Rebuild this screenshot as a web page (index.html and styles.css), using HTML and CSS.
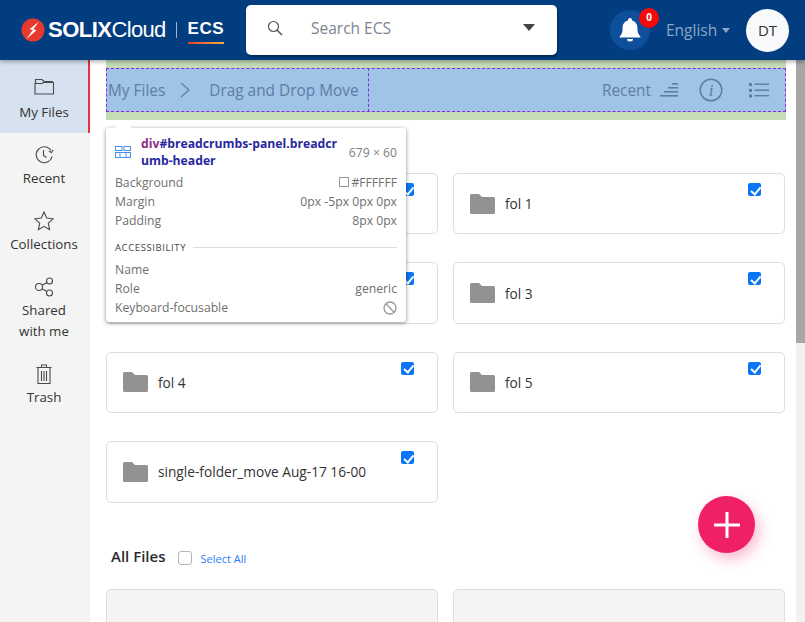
FILE: index.html
```html
<!DOCTYPE html>
<html lang="en">
<head>
  <meta charset="UTF-8">
  <title>ECS - My Files</title>
  <link rel="stylesheet" href="styles.css">
</head>
<body>
  <header class="topbar">
    <div class="logo">
      <svg class="logo-mark" width="24" height="24" viewBox="0 0 24 24">
        <circle cx="12" cy="12" r="11.5" fill="#e8392f"/>
        <path d="M18 3.500 L8.500 11.200 L11.800 12 L5.500 21 L15.500 12.200 L12.300 11.300 Z" fill="#fff"/>
      </svg>
      <span class="logo-solix">SOLIX</span><span class="logo-cloud">Cloud</span>
      <span class="logo-sep"></span>
      <span class="logo-ecs">ECS</span>
    </div>
    <div class="search">
      <svg width="16" height="16" viewBox="0 0 16 16" fill="none" stroke="#555" stroke-width="1.2">
        <circle cx="6.5" cy="6.5" r="5"/>
        <path d="M10.2 10.2 L15 15" stroke-width="1.6"/>
      </svg>
      <span class="search-text">Search ECS</span>
      <span class="search-caret"></span>
    </div>
    <div class="top-right">
      <div class="bell">
        <svg width="22" height="26" viewBox="0 0 22 26" fill="#fff">
          <path d="M11 1 a2 2 0 0 1 2 2 v.6 c3.6 .8 5.4 3.8 5.4 7.4 c0 4.6 1 6.4 3 8.5 v1 H.6 v-1 c2 -2.100 3 -3.900 3 -8.500 c0 -3.600 1.800 -6.600 5.400 -7.400 V3 a2 2 0 0 1 2 -2 z"/>
          <path d="M8 22 h6 a3 2.500 0 0 1 -6 0 z"/>
        </svg>
        <span class="badge">0</span>
      </div>
      <div class="lang">English<span class="lang-caret"></span></div>
      <div class="avatar">DT</div>
    </div>
  </header>

  <div class="layout">
    <nav class="sidebar">
      <a class="nav-item active">
        <svg width="22" height="20" viewBox="0 0 22 20" fill="none" stroke="#4a4a4a" stroke-width="1.100">
          <path d="M2.500 8 V3.500 H9 L11 5.500 H19.500 V7"/>
          <path d="M2 7.500 H9 L10.500 6.500 H20.500 V18 H2 Z"/>
        </svg>
        <span>My Files</span>
      </a>
      <a class="nav-item">
        <svg width="22" height="20" viewBox="0 0 22 20" fill="none" stroke="#4a4a4a" stroke-width="1.100">
          <path d="M18 5.500 A8 8 0 1 0 19 11.500"/>
          <path d="M15.800 6.200 L18.600 7.600 L20.200 4.800"/>
          <path d="M10.500 5 V10.500 L13.500 12.500"/>
        </svg>
        <span>Recent</span>
      </a>
      <a class="nav-item">
        <svg width="22" height="20" viewBox="0 0 22 20" fill="none" stroke="#4a4a4a" stroke-width="1.100">
          <path d="M11 1 L13.700 7 L20 7.800 L15.300 12.200 L16.600 18.700 L11 15.400 L5.400 18.700 L6.700 12.200 L2 7.800 L8.300 7 Z"/>
        </svg>
        <span>Collections</span>
      </a>
      <a class="nav-item multi">
        <svg width="22" height="20" viewBox="0 0 22 20" fill="none" stroke="#4a4a4a" stroke-width="1.100">
          <circle cx="16.500" cy="4" r="3"/>
          <circle cx="16.500" cy="16" r="3"/>
          <circle cx="6" cy="10" r="3.500"/>
          <path d="M9 8.300 L13.900 5.500 M9 11.700 L13.900 14.500"/>
        </svg>
        <span>Shared<br>with me</span>
      </a>
      <a class="nav-item">
        <svg width="22" height="20" viewBox="0 0 22 20" fill="none" stroke="#4a4a4a" stroke-width="1.100">
          <path d="M3.500 3.500 h15 M8.500 3.500 V1 h5 v2.500"/>
          <path d="M5 4 V19.500 H17 V4"/>
          <path d="M8.500 7 V17 M11 7 V17 M13.500 7 V17"/>
        </svg>
        <span>Trash</span>
      </a>
    </nav>

    <main class="content">
      <div class="crumb-margin">
        <div class="crumb-panel">
          <div class="crumbs">
            <span>My Files</span>
            <svg width="12" height="16" viewBox="0 0 12 16" fill="none" stroke="#5d7ea3" stroke-width="1.200"><path d="M2 1 L10 8 L2 15"/></svg>
            <span>Drag and Drop Move</span>
          </div>
          <div class="crumb-tools">
            <span>Recent</span>
            <svg class="sort-icon" width="18" height="14" viewBox="0 0 18 14" fill="#5d7ea3">
              <rect x="12" y="0" width="6" height="1.600"/>
              <rect x="8" y="4" width="10" height="1.600"/>
              <rect x="4" y="8" width="14" height="1.600"/>
              <rect x="0" y="12" width="18" height="1.600"/>
            </svg>
            <svg class="info-icon" width="24" height="24" viewBox="0 0 24 24" fill="none" stroke="#5d7ea3" stroke-width="1.500">
              <circle cx="12" cy="12" r="10.800"/>
              <text x="12" y="18" text-anchor="middle" class="info-i">i</text>
            </svg>
            <svg class="list-icon" width="20" height="16" viewBox="0 0 20 16" fill="#5d7ea3">
              <rect x="0" y="1" width="3" height="3"/>
              <rect x="0" y="7" width="3" height="3"/>
              <rect x="0" y="12.500" width="3" height="3"/>
              <rect x="5.500" y="1.500" width="14.500" height="1.400"/>
              <rect x="5.500" y="7.500" width="14.500" height="1.400"/>
              <rect x="5.500" y="13" width="14.500" height="1.400"/>
            </svg>
          </div>
        </div>
      </div>

      <div class="grid folders">
        <div class="card"><span class="check"></span></div>
        <div class="card"><svg class="folder"><use href="#folder"/></svg><span>fol 1</span><span class="check"></span></div>
        <div class="card"><span class="check"></span></div>
        <div class="card"><svg class="folder"><use href="#folder"/></svg><span>fol 3</span><span class="check"></span></div>
        <div class="card"><svg class="folder"><use href="#folder"/></svg><span>fol 4</span><span class="check"></span></div>
        <div class="card"><svg class="folder"><use href="#folder"/></svg><span>fol 5</span><span class="check"></span></div>
        <div class="card"><svg class="folder"><use href="#folder"/></svg><span>single-folder_move Aug-17 16-00</span><span class="check"></span></div>
      </div>

      <div class="files-head">
        <h2>All Files</h2>
        <span class="empty-check"></span>
        <a class="select-all">Select All</a>
      </div>

      <div class="grid">
        <div class="file-card"></div>
        <div class="file-card"></div>
      </div>
    </main>

    <div class="scrollbar"><div class="thumb"></div></div>
  </div>

  <div class="highlight-arrow"></div>
  <div class="inspect">
    <div class="inspect-head">
      <svg width="16" height="12" viewBox="0 0 16 12" fill="none" stroke="#4a90e8" stroke-width="1">
        <rect x=".5" y=".5" width="6.500" height="4"/>
        <rect x="9" y=".5" width="6.500" height="4"/>
        <rect x=".5" y="6.500" width="15" height="5"/>
        <path d="M5 6.500 V11.500 M11 6.500 V11.500"/>
      </svg>
      <div class="inspect-name"><span class="tag">div</span><span class="selector">#breadcrumbs-panel.breadcrumb-header</span></div>
      <div class="inspect-size">679 × 60</div>
    </div>
    <div class="inspect-row"><span>Background</span><span class="value"><i class="swatch"></i>#FFFFFF</span></div>
    <div class="inspect-row"><span>Margin</span><span class="value">0px -5px 0px 0px</span></div>
    <div class="inspect-row"><span>Padding</span><span class="value">8px 0px</span></div>
    <div class="inspect-section"><span>ACCESSIBILITY</span><i></i></div>
    <div class="inspect-row"><span>Name</span></div>
    <div class="inspect-row"><span>Role</span><span class="value">generic</span></div>
    <div class="inspect-row"><span>Keyboard-focusable</span>
      <svg width="14" height="14" viewBox="0 0 14 14" fill="none" stroke="#999" stroke-width="1.300"><circle cx="7" cy="7" r="6"/><path d="M2.800 2.800 L11.200 11.200"/></svg>
    </div>
  </div>

  <button class="fab">
    <svg width="26" height="26" viewBox="0 0 26 26" fill="#fff"><rect x="11.500" y="0" width="3" height="26"/><rect x="0" y="11.500" width="26" height="3"/></svg>
  </button>

  <svg width="0" height="0" class="defs">
    <symbol id="folder" viewBox="0 0 25 20">
      <path d="M1.500 0 H9 L12 3 H23.500 A1.500 1.500 0 0 1 25 4.500 V18.500 A1.500 1.500 0 0 1 23.500 20 H1.500 A1.500 1.500 0 0 1 0 18.500 V1.500 A1.500 1.500 0 0 1 1.500 0 Z" fill="#929292"/>
    </symbol>
  </svg>
</body>
</html>
```

FILE: styles.css
```css
* {
  box-sizing: border-box;
}
html, body {
  height: 100%;
}
body {
  margin: 0;
  font-family: 'Open Sans', 'Noto Sans', sans-serif;
  font-size: 14px;
  color: #333;
  background-color: #fff;
  overflow: hidden;
  display: flex;
  flex-direction: column;
}
.defs {
  position: absolute;
}

/* top bar */
.topbar {
  height: 60px;
  flex: none;
  background-color: #023e7f;
  display: flex;
  align-items: flex-start;
  padding-left: 21px;
  box-shadow: 0 2px 4px rgba(0, 0, 0, .3);
  position: relative;
  z-index: 2;
}
.logo {
  display: flex;
  align-items: center;
  height: 60px;
  width: 225px;
  color: #fff;
  flex: none;
}
.logo-mark {
  margin-right: 3px;
}
.logo-solix {
  font-family: 'Liberation Sans', sans-serif;
  font-weight: 700;
  font-size: 22px;
  letter-spacing: -.5px;
}
.logo-cloud {
  font-family: 'Liberation Sans', sans-serif;
  font-size: 22px;
  letter-spacing: -.7px;
}
.logo-sep {
  width: 1px;
  height: 16px;
  background-color: #9fb6d0;
  margin: 0 11px 0 10px;
}
.logo-ecs {
  font-family: 'Liberation Sans', sans-serif;
  font-weight: 700;
  font-size: 17px;
  letter-spacing: .6px;
  line-height: 20px;
  padding-bottom: 3px;
  border-bottom: 2px solid;
  border-image: linear-gradient(90deg, #e8392f, #f5b23d) 1;
  margin-top: 3px;
}
.search {
  width: 311px;
  height: 50px;
  margin-top: 5px;
  flex: none;
  background-color: #fff;
  border-radius: 5px;
  box-shadow: 1px 2px 2px rgba(0, 0, 0, .35);
  display: flex;
  align-items: center;
  padding: 0 22px 4px 21px;
}
.search-text {
  margin-left: 28px;
  flex: 1;
  color: #7a8592;
  font-size: 15.5px;
}
.search-caret {
  border-left: 6px solid transparent;
  border-right: 6px solid transparent;
  border-top: 7px solid #444;
  margin-top: -2px;
}
.top-right {
  margin-left: 53px;
  display: flex;
  align-items: center;
  height: 60px;
}
.bell {
  width: 40px;
  height: 40px;
  border-radius: 50%;
  background-color: #0d4f9b;
  display: flex;
  align-items: center;
  justify-content: center;
  position: relative;
}
.badge {
  position: absolute;
  top: -2px;
  left: 29px;
  width: 20px;
  height: 20px;
  border-radius: 50%;
  background-color: #f50a0a;
  color: #fff;
  font-size: 10px;
  font-weight: 700;
  text-align: center;
  line-height: 18px;
}
.lang {
  margin-left: 16px;
  color: #8ba6c6;
  font-size: 15.5px;
  display: flex;
  align-items: center;
  width: 80px;
}
.lang-caret {
  border-left: 4.500px solid transparent;
  border-right: 4.500px solid transparent;
  border-top: 5px solid #8ba6c6;
  margin-left: 5px;
}
.avatar {
  width: 43px;
  height: 43px;
  border-radius: 50%;
  background-color: #f8f9fa;
  color: #333;
  font-size: 15px;
  display: flex;
  align-items: center;
  justify-content: center;
}

/* page body */
.layout {
  flex: 1;
  display: flex;
  min-height: 0;
}
.sidebar {
  width: 90px;
  flex: none;
  background-color: #f4f4f4;
}
.nav-item {
  display: flex;
  flex-direction: column;
  align-items: center;
  height: 66px;
  padding: 12px 2px 0 0;
  font-size: 13.300px;
  line-height: 21px;
  color: #333;
  text-align: center;
}
.nav-item svg {
  margin-bottom: 3px;
  flex: none;
}
.nav-item.active {
  background-color: #d6e2f0;
  border-right: 2px solid #e8333a;
  height: 73px;
  padding: 16px 0 0;
}
.nav-item.active svg {
  margin-bottom: 6px;
}
.nav-item.multi {
  height: 87px;
}
.content {
  flex: 1;
  min-width: 0;
  padding-left: 16px;
  padding-right: 11px;
  overflow: hidden;
}
.crumb-margin {
  background-color: #c5ddb6;
  padding: 8px 0;
  height: 60px;
  margin-right: -1px;
}
.crumb-panel {
  height: 44px;
  background-color: #a0c3e8;
  outline: 1px dashed #8a2be2;
  outline-offset: -1px;
  display: flex;
  align-items: center;
  justify-content: space-between;
  color: #5d7ea3;
  font-size: 15.400px;
}
.crumbs {
  height: 44px;
  width: 263px;
  padding-left: 2px;
  display: flex;
  align-items: center;
  border-right: 1px dashed #8a2be2;
}
.crumbs svg {
  margin: 0 18px 0 14px;
}
.crumb-tools {
  display: flex;
  align-items: center;
  padding-right: 17px;
}
.sort-icon {
  margin-left: 9px;
}
.info-icon {
  margin-left: 21px;
}
.info-i {
  font-family: 'Liberation Serif', serif;
  font-style: italic;
  font-size: 17px;
  fill: #5d7ea3;
  stroke: none;
}
.list-icon {
  margin-left: 26px;
}
.grid {
  display: grid;
  grid-template-columns: 332px 332px;
  column-gap: 15px;
}
.folders {
  margin-top: 53px;
  row-gap: 28px;
}
.card {
  height: 61.400px;
  border: 1px solid #dedede;
  border-radius: 5px;
  display: flex;
  align-items: center;
  padding-left: 16px;
  font-size: 13.700px;
  color: #333;
  position: relative;
}
.folder {
  width: 25px;
  height: 20px;
  margin-right: 10px;
  flex: none;
}
.check {
  position: absolute;
  top: 9px;
  right: 23px;
  width: 13px;
  height: 13px;
  border-radius: 2px;
  background-color: #0a76f6;
}
.check::after {
  content: "";
  position: absolute;
  left: 4.500px;
  top: 1.500px;
  width: 4px;
  height: 7.500px;
  border: solid #fff;
  border-width: 0 2px 2px 0;
  transform: rotate(40deg);
}
.files-head {
  display: flex;
  align-items: center;
  height: 30px;
  margin-top: 38.400px;
  padding-left: 5px;
}
.files-head h2 {
  margin: 0;
  font-size: 15px;
  font-weight: 600;
  color: #2b2b2b;
}
.empty-check {
  width: 14px;
  height: 14px;
  border: 1px solid #adb5bd;
  border-radius: 3px;
  margin: 5px 0 0 13px;
}
.select-all {
  font-size: 11px;
  color: #2f7bf6;
  margin: 6px 0 0 8px;
}
.file-card {
  height: 100px;
  margin-top: 18px;
  background-color: #f4f4f4;
  border: 1px solid #dedede;
  border-radius: 5px;
}
.scrollbar {
  width: 9px;
  flex: none;
  background-color: #f1f1f1;
}
.thumb {
  height: 283px;
  background-color: #a6a6a6;
}

/* devtools inspect tooltip */
.inspect {
  position: absolute;
  left: 106px;
  top: 128px;
  width: 300px;
  height: 194px;
  background-color: #fff;
  border-radius: 3px;
  box-shadow: 0 1px 4px rgba(0, 0, 0, .45);
  padding: 7px 9px 0;
  font-size: 12.200px;
  line-height: 19px;
  color: #6f6f6f;
  z-index: 3;
}
.highlight-arrow {
  position: absolute;
  left: 117px;
  top: 122px;
  width: 12px;
  height: 12px;
  background-color: #fff;
  transform: rotate(45deg);
  z-index: 4;
}
.inspect-head {
  display: flex;
  align-items: center;
  margin-bottom: 4px;
}
.inspect-name {
  width: 200px;
  margin-left: 10px;
  font-weight: 700;
  line-height: 17px;
  word-break: break-all;
}
.tag {
  color: #8e2b85;
}
.selector {
  color: #27279e;
}
.inspect-size {
  margin-left: auto;
  color: #808080;
}
.inspect-row {
  display: flex;
  justify-content: space-between;
  align-items: center;
  height: 19px;
}
.swatch {
  display: inline-block;
  width: 10px;
  height: 10px;
  border: 1px solid #999;
  margin-right: 2px;
}
.inspect-section {
  display: flex;
  align-items: center;
  margin: 8px 0 3px;
  font-size: 9.500px;
  letter-spacing: .6px;
  color: #444;
}
.inspect-section i {
  flex: 1;
  height: 1px;
  margin-left: 7px;
  background-color: #ddd;
}
.fab {
  position: absolute;
  left: 698px;
  top: 496px;
  width: 57px;
  height: 57px;
  border: 0;
  padding: 0;
  border-radius: 50%;
  background-color: #ef2063;
  box-shadow: 4px 6px 14px rgba(239, 32, 99, .3);
  display: flex;
  align-items: center;
  justify-content: center;
}
```
